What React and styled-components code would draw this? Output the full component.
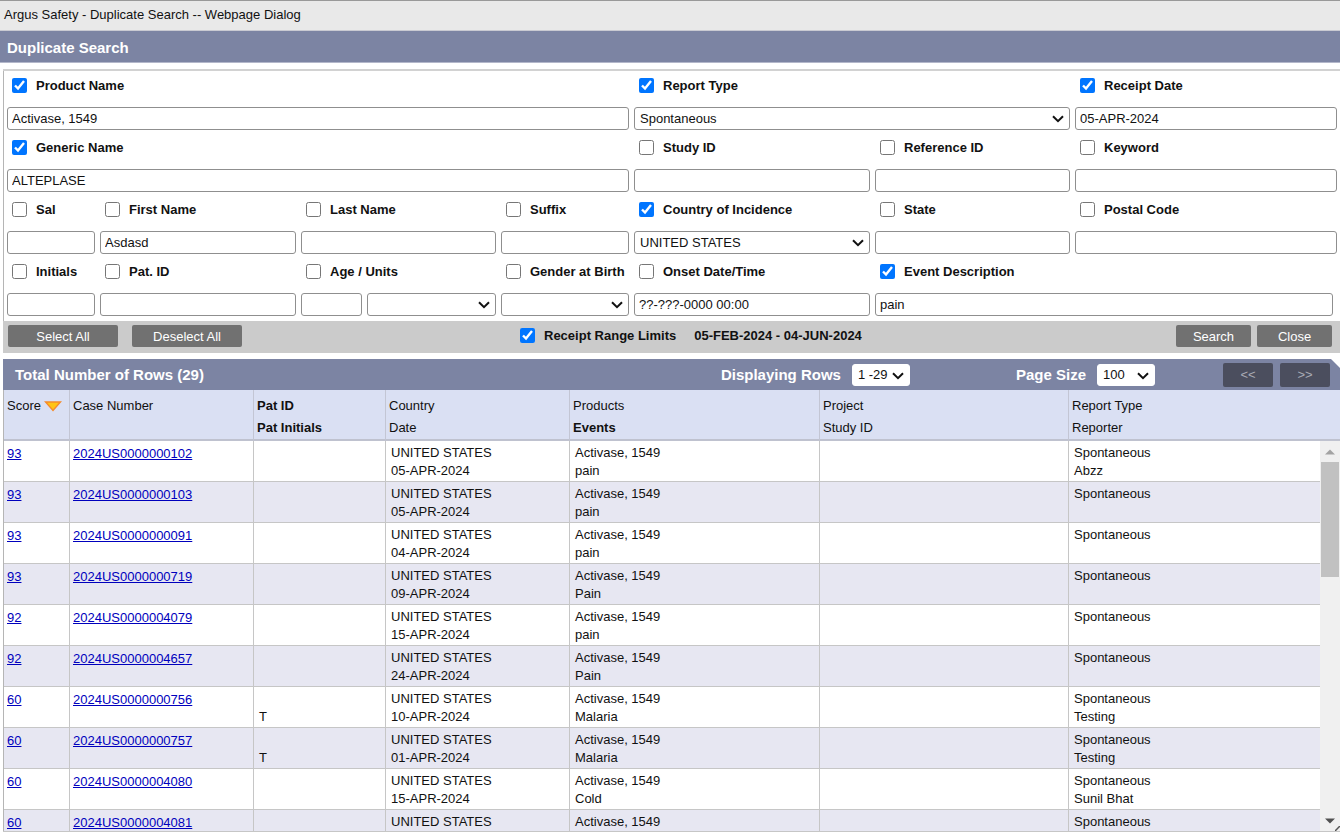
import styled, { createGlobalStyle } from "styled-components";

const fields = [
  { label: "Product Name", span: 4, checked: true, controls: [{ value: "Activase, 1549" }] },
  { label: "Report Type", span: 2, checked: true, controls: [{ type: "select", value: "Spontaneous" }] },
  { label: "Receipt Date", checked: true, controls: [{ value: "05-APR-2024" }] },

  { label: "Generic Name", span: 4, checked: true, controls: [{ value: "ALTEPLASE" }] },
  { label: "Study ID", controls: [{}] },
  { label: "Reference ID", controls: [{}] },
  { label: "Keyword", controls: [{}] },

  { label: "Sal", controls: [{}] },
  { label: "First Name", controls: [{ value: "Asdasd" }] },
  { label: "Last Name", controls: [{}] },
  { label: "Suffix", controls: [{}] },
  { label: "Country of Incidence", checked: true, controls: [{ type: "select", value: "UNITED STATES" }] },
  { label: "State", controls: [{}] },
  { label: "Postal Code", controls: [{}] },

  { label: "Initials", controls: [{}] },
  { label: "Pat. ID", controls: [{}] },
  { label: "Age / Units", split: true, controls: [{}, { type: "select" }] },
  { label: "Gender at Birth", controls: [{ type: "select" }] },
  { label: "Onset Date/Time", controls: [{ value: "??-???-0000 00:00" }] },
  { label: "Event Description", span: 2, inset: true, checked: true, controls: [{ value: "pain" }] },
];

const columns = [
  { width: 66, top: "Score", sorted: true },
  { width: 184, top: "Case Number" },
  { width: 132, top: "Pat ID", bottom: "Pat Initials", boldTop: true, boldBottom: true },
  { width: 184, top: "Country", bottom: "Date" },
  { width: 250, top: "Products", bottom: "Events", boldBottom: true },
  { width: 249, top: "Project", bottom: "Study ID" },
  { width: 251, top: "Report Type", bottom: "Reporter" },
];

const cases = [
  { score: 93, number: "2024US0000000102", date: "05-APR-2024", event: "pain", reporter: "Abzz" },
  { score: 93, number: "2024US0000000103", date: "05-APR-2024", event: "pain" },
  { score: 93, number: "2024US0000000091", date: "04-APR-2024", event: "pain" },
  { score: 93, number: "2024US0000000719", date: "09-APR-2024", event: "Pain" },
  { score: 92, number: "2024US0000004079", date: "15-APR-2024", event: "pain" },
  { score: 92, number: "2024US0000004657", date: "24-APR-2024", event: "Pain" },
  { score: 60, number: "2024US0000000756", initials: "T", date: "10-APR-2024", event: "Malaria", reporter: "Testing" },
  { score: 60, number: "2024US0000000757", initials: "T", date: "01-APR-2024", event: "Malaria", reporter: "Testing" },
  { score: 60, number: "2024US0000004080", date: "15-APR-2024", event: "Cold", reporter: "Sunil Bhat" },
  { score: 60, number: "2024US0000004081" },
];

const SelectBox = ({ label, value = "", plain }) => (
  <SelectWrapper>
    <Select aria-label={label} defaultValue={value} $plain={plain}>
      <option value={value}>{value}</option>
    </Select>
    <svg width="12" height="8" viewBox="0 0 12 8" aria-hidden="true">
      <path d="M1 1.2 L6 6.2 L11 1.2" fill="none" stroke="#111" strokeWidth="2" />
    </svg>
  </SelectWrapper>
);

const SearchField = ({ label, span, inset, split, checked, controls }) => (
  <Field $span={span} $inset={inset}>
    <CheckLabel>
      <Checkbox type="checkbox" defaultChecked={checked} />
      {label}
    </CheckLabel>
    <Controls $split={split}>
      {controls.map(({ type, value }, i) =>
        type === "select" ? (
          <SelectBox key={i} label={label} value={value} />
        ) : (
          <TextInput key={i} type="text" aria-label={label} defaultValue={value} />
        )
      )}
    </Controls>
  </Field>
);

const App = () => {
  return (
    <Dialog>
      <GlobalStyle />
      <WindowTitle>Argus Safety - Duplicate Search -- Webpage Dialog</WindowTitle>
      <Heading>Duplicate Search</Heading>
      <Content>
        <SearchForm onSubmit={(e) => e.preventDefault()}>
          <FieldGrid>
            {fields.map((field) => (
              <SearchField key={field.label} {...field} />
            ))}
          </FieldGrid>
          <ActionBar>
            <ButtonGroup $gap={14}>
              <Button type="button" $width={110}>Select All</Button>
              <Button type="button" $width={110}>Deselect All</Button>
            </ButtonGroup>
            <RangeLimits>
              <CheckLabel>
                <Checkbox type="checkbox" defaultChecked />
                Receipt Range Limits
              </CheckLabel>
              <span>05-FEB-2024 - 04-JUN-2024</span>
            </RangeLimits>
            <ButtonGroup $gap={6}>
              <Button type="submit" $width={75}>Search</Button>
              <Button type="button" $width={75}>Close</Button>
            </ButtonGroup>
          </ActionBar>
        </SearchForm>

        <ResultsBar>
          <h2>Total Number of Rows (29)</h2>
          <Pager>
            <span>Displaying Rows</span>
            <SelectBox label="Displaying Rows" value="1 -29" plain />
          </Pager>
          <Pager>
            <span>Page Size</span>
            <SelectBox label="Page Size" value="100" plain />
          </Pager>
          <PageButtons>
            <PageButton type="button">&lt;&lt;</PageButton>
            <PageButton type="button">&gt;&gt;</PageButton>
          </PageButtons>
        </ResultsBar>

        <Results>
          <TableArea>
            <Table>
              <colgroup>
                {columns.map(({ top, width }) => (
                  <col key={top} style={{ width }} />
                ))}
              </colgroup>
              <thead>
                <tr>
                  {columns.map(({ top, bottom, boldTop, boldBottom, sorted }) => (
                    <HeaderCell key={top} scope="col">
                      <HeaderLine $bold={boldTop}>
                        {top}
                        {sorted && (
                          <svg width="18" height="11" viewBox="0 0 18 11" aria-hidden="true">
                            <path d="M1.5 1 H16.5 L9 9.5 Z" fill="#ffc414" stroke="#f58a2c" strokeWidth="1.4" />
                          </svg>
                        )}
                      </HeaderLine>
                      {bottom && <HeaderLine $bold={boldBottom}>{bottom}</HeaderLine>}
                    </HeaderCell>
                  ))}
                </tr>
              </thead>
              <tbody>
                {cases.map(({ score, number, initials, date, event, reporter }) => (
                  <Row key={number}>
                    <LinkCell>
                      <a href="#score">{score}</a>
                    </LinkCell>
                    <LinkCell>
                      <a href="#case">{number}</a>
                    </LinkCell>
                    <Cell>
                      <br />
                      {initials}
                    </Cell>
                    <Cell>
                      UNITED STATES
                      <br />
                      {date}
                    </Cell>
                    <Cell>
                      Activase, 1549
                      <br />
                      {event}
                    </Cell>
                    <Cell />
                    <Cell>
                      Spontaneous
                      <br />
                      {reporter}
                    </Cell>
                  </Row>
                ))}
              </tbody>
            </Table>
          </TableArea>
          <ScrollColumn aria-hidden="true">
            <ScrollHead />
            <ScrollArrow>
              <svg width="10" height="6" viewBox="0 0 10 6">
                <path d="M0 5.5 L5 0.5 L10 5.5 Z" fill="#a3a3a3" />
              </svg>
            </ScrollArrow>
            <ScrollTrack>
              <ScrollThumb />
            </ScrollTrack>
            <ScrollArrow>
              <svg width="10" height="6" viewBox="0 0 10 6">
                <path d="M0 0.5 L5 5.5 L10 0.5 Z" fill="#505050" />
              </svg>
            </ScrollArrow>
            <ResizeCorner width="5" height="5" viewBox="0 0 5 5">
              <path d="M0 5 L5 0" stroke="#555" strokeWidth="1.5" />
            </ResizeCorner>
          </ScrollColumn>
        </Results>
      </Content>
    </Dialog>
  );
};

export default App;

const GlobalStyle = createGlobalStyle`
  * {
    box-sizing: border-box;
  }
  body {
    margin: 0;
    background: #fff;
    color: #111;
    font-family: "Liberation Sans", Arial, sans-serif;
    font-size: 13px;
  }
  input, select, button {
    font: inherit;
    color: inherit;
  }
`;

const Dialog = styled.div`
  display: flex;
  flex-direction: column;
  height: 100vh;
  overflow: hidden;
`;

const WindowTitle = styled.header`
  padding: 0 4px 2px;
  line-height: 27px;
  background: #e9e9e9;
  border-top: 1px solid #999;
  border-bottom: 1px solid #c9cad2;
`;

const Heading = styled.h1`
  margin: 0;
  padding: 2px 7px 0;
  line-height: 29px;
  font-size: 15px;
  color: #fff;
  background: #7c84a3;
  border-bottom: 1px solid #b3b7ca;
`;

const Content = styled.main`
  display: flex;
  flex-direction: column;
  flex: 1;
  min-height: 0;
  margin: 6px 0 0 3px;
`;

const SearchForm = styled.form`
  border-top: 2px solid #d2d2d2;
`;

const FieldGrid = styled.div`
  display: grid;
  grid-template-columns:
    minmax(0, 88fr) minmax(0, 196fr) minmax(0, 195fr) minmax(0, 128fr)
    minmax(0, 236fr) minmax(0, 195fr) minmax(0, 262fr);
  gap: 9px 5px;
  padding: 6px 3px 5px;
  border-left: 1px solid #b5b5b5;
`;

const Field = styled.div`
  grid-column: span ${({ $span }) => $span || 1};
  padding-right: ${({ $inset }) => ($inset ? "4px" : "0")};
`;

const CheckLabel = styled.label`
  display: flex;
  align-items: center;
  gap: 9px;
  height: 16px;
  padding-left: 5px;
  font-weight: bold;
  white-space: nowrap;
`;

const Checkbox = styled.input`
  flex: none;
  width: 15px;
  height: 15px;
  margin: 0;
  accent-color: #0075ff;
`;

const Controls = styled.div`
  display: grid;
  grid-template-columns: ${({ $split }) => ($split ? "minmax(0, 61fr) minmax(0, 129fr)" : "minmax(0, 1fr)")};
  gap: 5px;
  margin-top: 14px;
`;

const TextInput = styled.input`
  width: 100%;
  height: 23px;
  padding: 0 4px;
  border: 1px solid #8f8f8f;
  border-radius: 3px;
  background: #fff;
`;

const SelectWrapper = styled.div`
  position: relative;
  svg {
    position: absolute;
    right: 6px;
    top: 8px;
    pointer-events: none;
  }
`;

const Select = styled.select`
  appearance: none;
  display: block;
  width: 100%;
  height: ${({ $plain }) => ($plain ? "22px" : "23px")};
  padding: 0 20px 0 5px;
  border: 1px solid ${({ $plain }) => ($plain ? "#fff" : "#8f8f8f")};
  border-radius: 3px;
  background: #fff;
`;

const ActionBar = styled.div`
  display: grid;
  grid-template-columns: 512px 1fr auto;
  align-items: center;
  height: 32px;
  padding: 0 8px 2px 5px;
  background: #cbcbcb;
`;

const ButtonGroup = styled.div`
  display: flex;
  gap: ${({ $gap }) => $gap}px;
`;

const Button = styled.button`
  width: ${({ $width }) => $width}px;
  height: 22px;
  padding: 0;
  border: 0;
  border-radius: 2px;
  color: #fff;
  background: #717171;
`;

const RangeLimits = styled.div`
  display: flex;
  align-items: center;
  gap: 18px;
  padding-bottom: 2px;
  font-weight: bold;
  white-space: nowrap;
  ${CheckLabel} {
    padding-left: 0;
  }
`;

const ResultsBar = styled.div`
  display: flex;
  align-items: center;
  flex: none;
  height: 31px;
  margin-top: 6px;
  padding: 0 10px 0 12px;
  color: #fff;
  font-size: 15px;
  font-weight: bold;
  background: #7c84a3;
  clip-path: polygon(0 0, calc(100% - 9px) 0, 100% 9px, 100% 100%, 0 100%);
  h2 {
    margin: 0 auto 0 0;
    font-size: 15px;
  }
`;

const Pager = styled.div`
  display: flex;
  align-items: center;
  gap: 11px;
  & + & {
    margin-left: 106px;
  }
  ${SelectWrapper} {
    flex: 0 0 58px;
    color: #111;
    font-size: 13px;
    font-weight: normal;
  }
`;

const PageButtons = styled.div`
  display: flex;
  gap: 7px;
  margin-left: 68px;
`;

const PageButton = styled.button`
  width: 50px;
  height: 24px;
  padding: 0;
  border: 0;
  border-radius: 2px;
  color: #a9abb5;
  font-size: 13px;
  font-weight: normal;
  background: #4b4e5e;
`;

const Results = styled.div`
  display: flex;
  flex: 1;
  min-height: 0;
  border-bottom: 1px solid #c6c6c6;
`;

const TableArea = styled.div`
  flex: 1;
  min-width: 0;
  overflow: hidden;
`;

const Table = styled.table`
  width: 100%;
  table-layout: fixed;
  border-collapse: separate;
  border-spacing: 0;
  border-left: 1px solid #b5b5b5;
`;

const HeaderCell = styled.th`
  height: 51px;
  padding: 5px 3px 0;
  vertical-align: top;
  text-align: left;
  font-weight: normal;
  background: #dae0f3;
  border-right: 1px solid #c3c6d4;
  border-bottom: 2px solid #bfc2cf;
  &:last-child {
    border-right: 0;
  }
`;

const HeaderLine = styled.div`
  display: flex;
  align-items: center;
  gap: 3px;
  line-height: 22px;
  font-weight: ${({ $bold }) => ($bold ? "bold" : "normal")};
`;

const Cell = styled.td`
  height: 41px;
  padding: 3px 5px 1px;
  vertical-align: top;
  line-height: 18px;
  border-right: 1px solid #c6c6c6;
  border-bottom: 1px solid #c6c6c6;
  &:last-child {
    border-right: 0;
  }
`;

const LinkCell = styled(Cell)`
  padding: 4px 3px 0;
  a {
    color: #0000bd;
  }
`;

const Row = styled.tr`
  &:nth-child(even) {
    background: #e7e7f2;
  }
`;

const ScrollColumn = styled.div`
  position: relative;
  display: flex;
  flex-direction: column;
  flex: 0 0 20px;
  background: #f0f0f0;
`;

const ScrollHead = styled.div`
  height: 51px;
  background: #dae0f3;
  border-bottom: 2px solid #bfc2cf;
`;

const ScrollArrow = styled.div`
  display: flex;
  align-items: center;
  justify-content: center;
  height: 21px;
`;

const ScrollTrack = styled.div`
  flex: 1;
  padding: 0 1px;
`;

const ScrollThumb = styled.div`
  height: 33%;
  background: #c1c1c1;
`;

const ResizeCorner = styled.svg`
  position: absolute;
  right: 0;
  bottom: 0;
`;
